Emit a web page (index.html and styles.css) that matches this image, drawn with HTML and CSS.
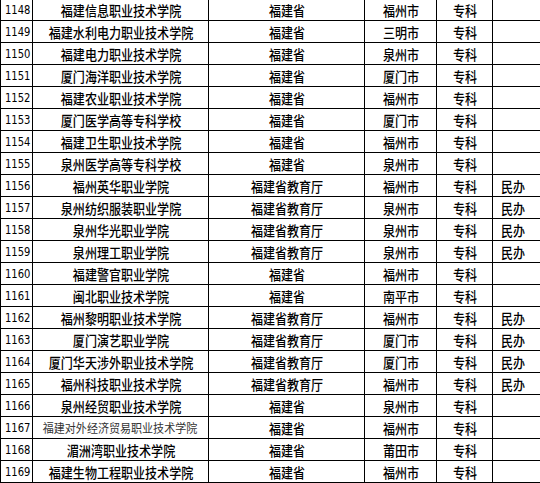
FILE: index.html
```html
<!DOCTYPE html>
<html lang="zh">
<head>
<meta charset="utf-8">
<link rel="stylesheet" href="styles.css">
</head>
<body>
<table class="list">
<colgroup>
<col class="c-no"><col class="c-name"><col class="c-dept"><col class="c-city"><col class="c-level"><col class="c-note">
</colgroup>
<tbody>
<tr><td class="no"><span>1148</span></td><td><span>福建信息职业技术学院</span></td><td><span>福建省</span></td><td><span>福州市</span></td><td><span>专科</span></td><td></td></tr>
<tr><td class="no"><span>1149</span></td><td><span>福建水利电力职业技术学院</span></td><td><span>福建省</span></td><td><span>三明市</span></td><td><span>专科</span></td><td></td></tr>
<tr><td class="no"><span>1150</span></td><td><span>福建电力职业技术学院</span></td><td><span>福建省</span></td><td><span>泉州市</span></td><td><span>专科</span></td><td></td></tr>
<tr><td class="no"><span>1151</span></td><td><span>厦门海洋职业技术学院</span></td><td><span>福建省</span></td><td><span>厦门市</span></td><td><span>专科</span></td><td></td></tr>
<tr><td class="no"><span>1152</span></td><td><span>福建农业职业技术学院</span></td><td><span>福建省</span></td><td><span>福州市</span></td><td><span>专科</span></td><td></td></tr>
<tr><td class="no"><span>1153</span></td><td><span>厦门医学高等专科学校</span></td><td><span>福建省</span></td><td><span>厦门市</span></td><td><span>专科</span></td><td></td></tr>
<tr><td class="no"><span>1154</span></td><td><span>福建卫生职业技术学院</span></td><td><span>福建省</span></td><td><span>福州市</span></td><td><span>专科</span></td><td></td></tr>
<tr><td class="no"><span>1155</span></td><td><span>泉州医学高等专科学校</span></td><td><span>福建省</span></td><td><span>泉州市</span></td><td><span>专科</span></td><td></td></tr>
<tr><td class="no"><span>1156</span></td><td><span>福州英华职业学院</span></td><td><span>福建省教育厅</span></td><td><span>福州市</span></td><td><span>专科</span></td><td class="note"><span>民办</span></td></tr>
<tr><td class="no"><span>1157</span></td><td><span>泉州纺织服装职业学院</span></td><td><span>福建省教育厅</span></td><td><span>泉州市</span></td><td><span>专科</span></td><td class="note"><span>民办</span></td></tr>
<tr><td class="no"><span>1158</span></td><td><span>泉州华光职业学院</span></td><td><span>福建省教育厅</span></td><td><span>泉州市</span></td><td><span>专科</span></td><td class="note"><span>民办</span></td></tr>
<tr><td class="no"><span>1159</span></td><td><span>泉州理工职业学院</span></td><td><span>福建省教育厅</span></td><td><span>泉州市</span></td><td><span>专科</span></td><td class="note"><span>民办</span></td></tr>
<tr><td class="no"><span>1160</span></td><td><span>福建警官职业学院</span></td><td><span>福建省</span></td><td><span>福州市</span></td><td><span>专科</span></td><td></td></tr>
<tr><td class="no"><span>1161</span></td><td><span>闽北职业技术学院</span></td><td><span>福建省</span></td><td><span>南平市</span></td><td><span>专科</span></td><td></td></tr>
<tr><td class="no"><span>1162</span></td><td><span>福州黎明职业技术学院</span></td><td><span>福建省教育厅</span></td><td><span>福州市</span></td><td><span>专科</span></td><td class="note"><span>民办</span></td></tr>
<tr><td class="no"><span>1163</span></td><td><span>厦门演艺职业学院</span></td><td><span>福建省教育厅</span></td><td><span>厦门市</span></td><td><span>专科</span></td><td class="note"><span>民办</span></td></tr>
<tr><td class="no"><span>1164</span></td><td><span>厦门华天涉外职业技术学院</span></td><td><span>福建省教育厅</span></td><td><span>厦门市</span></td><td><span>专科</span></td><td class="note"><span>民办</span></td></tr>
<tr><td class="no"><span>1165</span></td><td><span>福州科技职业技术学院</span></td><td><span>福建省教育厅</span></td><td><span>福州市</span></td><td><span>专科</span></td><td class="note"><span>民办</span></td></tr>
<tr><td class="no"><span>1166</span></td><td><span>泉州经贸职业技术学院</span></td><td><span>福建省</span></td><td><span>泉州市</span></td><td><span>专科</span></td><td></td></tr>
<tr><td class="no"><span>1167</span></td><td class="small"><span>福建对外经济贸易职业技术学院</span></td><td><span>福建省</span></td><td><span>福州市</span></td><td><span>专科</span></td><td></td></tr>
<tr><td class="no"><span>1168</span></td><td><span>湄洲湾职业技术学院</span></td><td><span>福建省</span></td><td><span>莆田市</span></td><td><span>专科</span></td><td></td></tr>
<tr><td class="no"><span>1169</span></td><td><span>福建生物工程职业技术学院</span></td><td><span>福建省</span></td><td><span>福州市</span></td><td><span>专科</span></td><td></td></tr>
</tbody>
</table>
</body>
</html>
```
FILE: styles.css
```css
html, body {
  margin: 0;
  padding: 0;
  background: #ffffff;
}
body {
  overflow: hidden;
  font-family: "Noto Sans CJK SC", "Liberation Sans", sans-serif;
  color: #000000;
}
.list {
  border-collapse: collapse;
  table-layout: fixed;
  width: 540px;
  margin-top: -2px;
}
.c-no { width: 32px; }
.c-name { width: 176px; }
.c-dept { width: 156px; }
.c-city { width: 72px; }
.c-level { width: 56px; }
.c-note { width: 48px; }
.list td {
  border: 1px solid #000000;
  height: 21px;
  padding: 0;
  text-align: center;
  vertical-align: middle;
  white-space: nowrap;
  font-size: 14px;
  font-weight: 500;
  line-height: 16px;
  overflow: hidden;
}
.list td span {
  display: inline-block;
  transform: scaleX(0.86);
}
.list td.no {
  text-align: left;
  padding-left: 4px;
  font-family: "DejaVu Sans", sans-serif;
  font-weight: normal;
  font-size: 12.5px;
}
.list td.no span {
  transform-origin: left center;
  transform: scaleX(0.8);
}
.list td.note {
  padding-right: 7px;
}
.list td.small {
  font-size: 12px;
  font-weight: normal;
  color: #333333;
}
.list td.small span {
  transform: scaleX(0.92);
}
```
